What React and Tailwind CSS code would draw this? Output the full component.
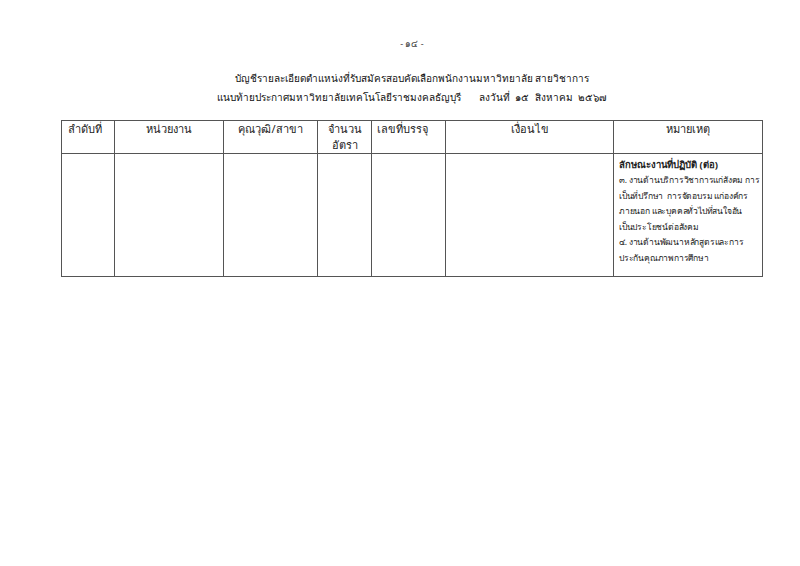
import React from 'react'

const columns = [
  { label: 'ลำดับที่', width: 'w-[53px]', align: 'text-left pl-[6px]' },
  { label: 'หน่วยงาน', width: 'w-[109px]', align: 'text-center' },
  { label: 'คุณวุฒิ/สาขา', width: 'w-[94px]', align: 'text-center' },
  { label: ['จำนวน', 'อัตรา'], width: 'w-[54px]', align: 'text-center' },
  { label: 'เลขที่บรรจุ', width: 'w-[74px]', align: 'text-left pl-[5px]' },
  { label: 'เงื่อนไข', width: 'w-[168px]', align: 'text-center' },
  { label: 'หมายเหตุ', width: 'w-[149px]', align: 'text-center' },
]

const remarks = [
  '๓. งานด้านบริการวิชาการแก่สังคม การ',
  'เป็นที่ปรึกษา\u00a0 การจัดอบรม แก่องค์กร',
  'ภายนอก และบุคคลทั่วไปที่สนใจอัน',
  'เป็นประโยชน์ต่อสังคม',
  '๔. งานด้านพัฒนาหลักสูตรและการ',
  'ประกันคุณภาพการศึกษา',
]

export default function App() {
  return (
    <div className="h-[566px] w-[800px] bg-white font-['Noto_Sans','DejaVu_Sans',sans-serif] text-[#222]">
      <div className="pl-[24px] pt-[37px] text-center text-[9px] text-[#444]">- ๑๔ -</div>

      <div className="mt-[18px] pl-[24px] text-center text-[10px] leading-[19px] text-[#111]">
        <div>บัญชีรายละเอียดตำแหน่งที่รับสมัครสอบคัดเลือกพนักงานมหาวิทยาลัย สายวิชาการ</div>
        <div>
          แนบท้ายประกาศมหาวิทยาลัยเทคโนโลยีราชมงคลธัญบุรี
          <span className="ml-[18px]">ลงวันที่&nbsp; ๑๕&nbsp; สิงหาคม&nbsp; ๒๕๖๗</span>
        </div>
      </div>

      <table className="ml-[61px] mt-[13px] w-[701px] table-fixed border-collapse text-[11px] leading-[16px]">
        <thead>
          <tr className="h-[33px]">
            {columns.map((col, i) => (
              <th
                key={i}
                className={`${col.width} ${col.align} border border-[#555] pt-0 align-top font-normal`}
              >
                {Array.isArray(col.label)
                  ? col.label.map((l) => <div key={l}>{l}</div>)
                  : col.label}
              </th>
            ))}
          </tr>
        </thead>
        <tbody>
          <tr className="h-[123px]">
            <td className="border border-[#555]" />
            <td className="border border-[#555]" />
            <td className="border border-[#555]" />
            <td className="border border-[#555]" />
            <td className="border border-[#555]" />
            <td className="border border-[#555]" />
            <td className="whitespace-nowrap border border-[#555] px-[5px] pt-[3px] align-top text-[8.5px] leading-[15.5px] tracking-[-0.2px]">
              <div className="text-[9.5px] font-bold tracking-normal">ลักษณะงานที่ปฏิบัติ (ต่อ)</div>
              {remarks.map((line) => (
                <div key={line}>{line}</div>
              ))}
            </td>
          </tr>
        </tbody>
      </table>
    </div>
  )
}
